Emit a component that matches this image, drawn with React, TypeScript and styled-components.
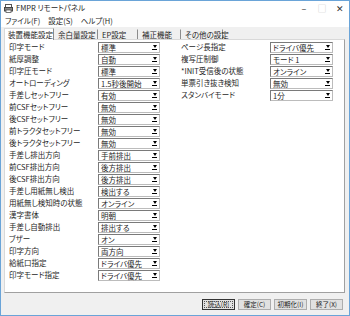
import React from 'react';
import styled, { createGlobalStyle } from 'styled-components';

const GlobalStyle = createGlobalStyle`
  html, body {
    margin: 0;
    padding: 0;
    background: #ffffff;
  }
  * {
    box-sizing: border-box;
  }
`;

const Window = styled.div`
  width: 350px;
  height: 316px;
  border: 1px solid #6aa4d8;
  background: #f0f0f0;
  display: flex;
  flex-direction: column;
  font-family: 'Noto Sans CJK JP', 'Noto Sans', sans-serif;
  font-size: 7.5px;
  font-feature-settings: 'palt';
  color: #1e1e1e;
  overflow: hidden;
`;

const TitleBar = styled.div`
  height: 14px;
  background: #fff;
  display: flex;
  align-items: center;
  padding-left: 3px;
  gap: 3px;
`;

const TitleText = styled.span`
  flex: 1;
  font-size: 7.5px;
  line-height: 1;
`;

const WinControls = styled.div`
  display: flex;
  align-items: center;
  height: 100%;
`;

const WinButton = styled.span<{ $dim?: boolean }>`
  width: 18px;
  text-align: center;
  font-size: 9px;
  line-height: 1;
  color: ${p => (p.$dim ? '#c8c8c8' : '#333')};
`;

const MenuBar = styled.div`
  height: 12px;
  background: #fff;
  display: flex;
  align-items: center;
  padding-left: 4px;
  gap: 8px;
  line-height: 1;
`;

const Body = styled.div`
  flex: 1;
  display: flex;
  flex-direction: column;
  padding: 0 4px 0 3px;
`;

const TabStrip = styled.div`
  height: 12px;
  display: flex;
  align-items: flex-end;
`;

const Tab = styled.div<{ $active?: boolean; $w: number }>`
  width: ${p => p.$w}px;
  height: ${p => (p.$active ? '12px' : '10px')};
  display: flex;
  align-items: center;
  padding-left: ${p => (p.$active ? '3px' : '3px')};
  line-height: 1;
  white-space: nowrap;
  background: ${p => (p.$active ? '#fff' : 'transparent')};
  border-top: 1px solid ${p => (p.$active ? '#d9d9d9' : 'transparent')};
  border-left: 1px solid ${p => (p.$active ? '#d9d9d9' : 'transparent')};
  border-right: 1px solid #8c8c8c;
  margin-bottom: ${p => (p.$active ? '-1px' : '0')};
  position: relative;
  z-index: ${p => (p.$active ? 1 : 0)};
`;

const Panel = styled.div`
  height: 254px;
  background: #fff;
  border: 1px solid #d9d9d9;
  border-right-color: #a0a0a0;
  border-bottom-color: #a0a0a0;
  display: flex;
  padding: 1px 0 0 4px;
  gap: 21px;
`;

const Column = styled.div`
  display: flex;
  flex-direction: column;
`;

const Row = styled.div`
  height: 12px;
  display: flex;
  align-items: center;
`;

const Label = styled.span`
  width: 89px;
  line-height: 1;
  white-space: nowrap;
`;

const Combo = styled.div<{ $w: number }>`
  width: ${p => p.$w}px;
  height: 11px;
  border: 1px solid #7a7a7a;
  border-right-color: #bcbcbc;
  border-bottom-color: #bcbcbc;
  background: #fff;
  display: flex;
  align-items: center;
  padding-left: 2px;
`;

const ComboValue = styled.span`
  flex: 1;
  white-space: nowrap;
  line-height: 9px;
`;

const DropButton = styled.span`
  width: 9px;
  height: 9px;
  display: flex;
  flex-direction: column;
  align-items: center;
  justify-content: center;
  gap: 1px;
  &::before {
    content: '';
    width: 0;
    height: 0;
    border-left: 2.5px solid transparent;
    border-right: 2.5px solid transparent;
    border-top: 3px solid #000;
  }
  &::after {
    content: '';
    width: 5px;
    height: 1px;
    background: #000;
  }
`;

const Footer = styled.div`
  height: 20px;
  display: flex;
  justify-content: flex-end;
  align-items: center;
  gap: 3px;
  padding: 2px 2px 0 0;
`;

const Button = styled.button<{ $default?: boolean }>`
  width: 33px;
  height: 11px;
  padding: 0;
  font-family: inherit;
  font-size: 6.5px;
  font-feature-settings: 'palt';
  line-height: 1;
  color: #1e1e1e;
  background: #e1e1e1;
  border: 1px solid ${p => (p.$default ? '#333' : '#adadad')};
  outline: ${p => (p.$default ? '1px dotted #555' : 'none')};
  outline-offset: -3px;
`;

const AppIcon = () => (
  <svg width="9" height="9" viewBox="0 0 9 9">
    <rect x="1.5" y="0.5" width="6" height="3" fill="#fff" stroke="#555" />
    <rect x="0.5" y="3.5" width="8" height="3.5" fill="#888" stroke="#444" />
    <rect x="2" y="6" width="5" height="2.5" fill="#fff" stroke="#555" strokeWidth="0.8" />
  </svg>
);

const leftRows: [string, string][] = [
  ['印字モード', '標準'],
  ['紙厚調整', '自動'],
  ['印字圧モード', '標準'],
  ['オートローディング', '1.5秒後開始'],
  ['手差しセットフリー', '有効'],
  ['前CSFセットフリー', '無効'],
  ['後CSFセットフリー', '無効'],
  ['前トラクタセットフリー', '無効'],
  ['後トラクタセットフリー', '無効'],
  ['手差し排出方向', '手前排出'],
  ['前CSF排出方向', '後方排出'],
  ['後CSF排出方向', '後方排出'],
  ['手差し用紙無し検出', '検出する'],
  ['用紙無し検知時の状態', 'オンライン'],
  ['漢字書体', '明朝'],
  ['手差し自動排出', '排出する'],
  ['ブザー', 'オン'],
  ['印字方向', '両方向'],
  ['給紙口指定', 'ドライバ優先'],
  ['印字モード指定', 'ドライバ優先'],
];

const rightRows: [string, string][] = [
  ['ページ長指定', 'ドライバ優先'],
  ['複写圧制御', 'モード 1'],
  ['*INIT受信後の状態', 'オンライン'],
  ['単票引き抜き検知', '無効'],
  ['スタンバイモード', '1分'],
];

const tabs: [string, number][] = [
  ['装置機能設定', 50],
  ['余白量設定', 44],
  ['EP設定', 40],
  ['補正機能', 43],
  ['その他の設定', 42],
];

const SettingRow = ({ label, value, w }: { label: string; value: string; w: number }) => (
  <Row>
    <Label>{label}</Label>
    <Combo $w={w}>
      <ComboValue>{value}</ComboValue>
      <DropButton />
    </Combo>
  </Row>
);

export default function App() {
  return (
    <>
      <GlobalStyle />
      <Window>
        <TitleBar>
          <AppIcon />
          <TitleText>FMPR リモートパネル</TitleText>
          <WinControls>
            <WinButton>–</WinButton>
            <WinButton $dim>□</WinButton>
            <WinButton>✕</WinButton>
          </WinControls>
        </TitleBar>
        <MenuBar>
          <span>ファイル(F)</span>
          <span>設定(S)</span>
          <span>ヘルプ(H)</span>
        </MenuBar>
        <Body>
          <TabStrip>
            {tabs.map(([t, w], i) => (
              <Tab key={t} $w={w} $active={i === 0}>
                {t}
              </Tab>
            ))}
          </TabStrip>
          <Panel>
            <Column>
              {leftRows.map(([l, v]) => (
                <SettingRow key={l} label={l} value={v} w={62} />
              ))}
            </Column>
            <Column>
              {rightRows.map(([l, v]) => (
                <SettingRow key={l} label={l} value={v} w={63} />
              ))}
            </Column>
          </Panel>
          <Footer>
            <Button $default>読込(R)</Button>
            <Button>確定(C)</Button>
            <Button>初期化(I)</Button>
            <Button>終了(X)</Button>
          </Footer>
        </Body>
      </Window>
    </>
  );
}
